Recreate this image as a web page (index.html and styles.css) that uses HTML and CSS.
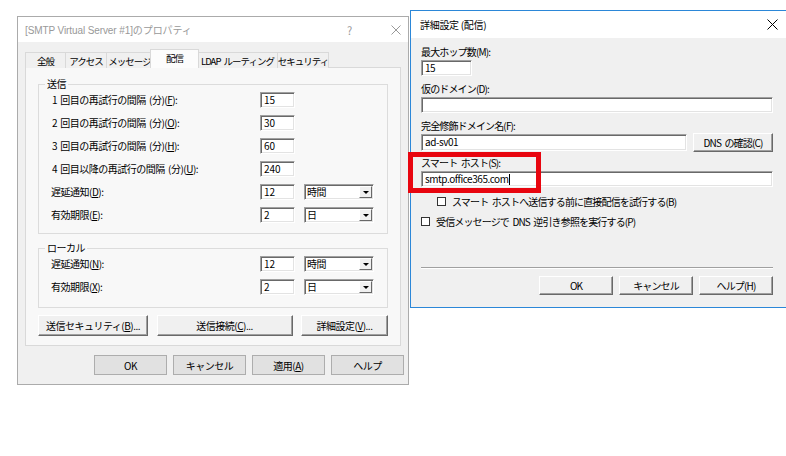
FILE: index.html
```html
<!DOCTYPE html>
<html lang="ja">
<head>
    <meta charset="UTF-8">
    <title>SMTP Virtual Server プロパティ</title>
    <link rel="stylesheet" href="styles.css">
</head>
<body>
    <div class="desk">
        <div class="win props">
            <div class="titlebar inactive">
                <span class="title">[SMTP Virtual Server #1]のプロパティ</span>
                <span class="tb-help">?</span>
                <svg class="tb-close" width="10" height="10" viewBox="0 0 10 10"><path d="M0.5 0.5 L9.5 9.5 M9.5 0.5 L0.5 9.5" stroke="currentColor" stroke-width="1"/></svg>
            </div>
            <div class="props-body">
                <div class="tabs">
                    <div class="tab t-general">全般</div>
                    <div class="tab t-access">アクセス</div>
                    <div class="tab t-message">メッセージ</div>
                    <div class="tab t-delivery active">配信</div>
                    <div class="tab t-ldap">LDAP ルーティング</div>
                    <div class="tab t-security">セキュリティ</div>
                </div>
                <div class="panel">
                    <fieldset class="group">
                        <legend>送信</legend>
                        <div class="frow">
                            <span class="lbl">1 回目の再試行の間隔 (分)(<u>F</u>):</span>
                            <span class="edit">15</span>
                        </div>
                        <div class="frow">
                            <span class="lbl">2 回目の再試行の間隔 (分)(<u>O</u>):</span>
                            <span class="edit">30</span>
                        </div>
                        <div class="frow">
                            <span class="lbl">3 回目の再試行の間隔 (分)(<u>H</u>):</span>
                            <span class="edit">60</span>
                        </div>
                        <div class="frow">
                            <span class="lbl">4 回目以降の再試行の間隔 (分)(<u>U</u>):</span>
                            <span class="edit">240</span>
                        </div>
                        <div class="frow">
                            <span class="lbl short">遅延通知(<u>D</u>):</span>
                            <span class="edit">12</span>
                            <span class="combo"><span class="combo-text">時間</span><span class="combo-btn"></span></span>
                        </div>
                        <div class="frow">
                            <span class="lbl short">有効期限(<u>E</u>):</span>
                            <span class="edit">2</span>
                            <span class="combo"><span class="combo-text">日</span><span class="combo-btn"></span></span>
                        </div>
                    </fieldset>
                    <fieldset class="group local">
                        <legend>ローカル</legend>
                        <div class="frow">
                            <span class="lbl short">遅延通知(<u>N</u>):</span>
                            <span class="edit">12</span>
                            <span class="combo"><span class="combo-text">時間</span><span class="combo-btn"></span></span>
                        </div>
                        <div class="frow">
                            <span class="lbl short">有効期限(<u>X</u>):</span>
                            <span class="edit">2</span>
                            <span class="combo"><span class="combo-text">日</span><span class="combo-btn"></span></span>
                        </div>
                    </fieldset>
                    <div class="panel-buttons">
                        <button class="btn3d b-sec">送信セキュリティ(<u>B</u>)...</button>
                        <button class="btn3d b-conn">送信接続(<u>C</u>)...</button>
                        <button class="btn3d b-adv">詳細設定(<u>V</u>)...</button>
                    </div>
                </div>
                <div class="dlg-buttons">
                    <button class="btn">OK</button>
                    <button class="btn">キャンセル</button>
                    <button class="btn">適用(<u>A</u>)</button>
                    <button class="btn">ヘルプ</button>
                </div>
            </div>
        </div>

        <div class="win adv">
            <div class="titlebar">
                <span class="title">詳細設定 (配信)</span>
                <svg class="tb-close" width="11" height="11" viewBox="0 0 11 11"><path d="M0.5 0.5 L10.5 10.5 M10.5 0.5 L0.5 10.5" stroke="currentColor" stroke-width="1"/></svg>
            </div>
            <div class="adv-body">
                <div class="flabel first">最大ホップ数(M):</div>
                <span class="edit hops">15</span>
                <div class="flabel">仮のドメイン(D):</div>
                <span class="edit"></span>
                <div class="flabel">完全修飾ドメイン名(F):</div>
                <div class="fqdn">
                    <span class="edit grow">ad-sv01</span>
                    <button class="btn3d dns">DNS の確認(C)</button>
                </div>
                <div class="flabel">スマート ホスト(S):</div>
                <span class="edit">smtp.office365.com<span class="caret"></span></span>
                <div class="check sub"><span class="box"></span>スマート ホストへ送信する前に直接配信を試行する(B)</div>
                <div class="check"><span class="box"></span>受信メッセージで DNS 逆引き参照を実行する(P)</div>
                <div class="sep"></div>
                <div class="adv-buttons">
                    <button class="btn3d">OK</button>
                    <button class="btn3d">キャンセル</button>
                    <button class="btn3d">ヘルプ(H)</button>
                </div>
            </div>
            <div class="mark"></div>
        </div>
    </div>
</body>
</html>
```

FILE: styles.css
```css
body {
    margin: 0;
    background: #fff;
    font-family: "Noto Sans CJK JP", "Liberation Sans", sans-serif;
    font-size: 10px;
    color: #000;
}

.desk {
    position: relative;
    width: 786px;
    height: 456px;
    overflow: hidden;
}

/* windows */
.win {
    position: absolute;
    box-sizing: border-box;
    background: #f0f0f0;
    display: flex;
    flex-direction: column;
}
.props {
    left: 17px;
    top: 16px;
    width: 392px;
    height: 369px;
    border: 1px solid #ababab;
    letter-spacing: -0.5px;
    word-spacing: 1.5px;
}
.adv {
    left: 410px;
    top: 10px;
    width: 380px;
    height: 298px;
    border: 1px solid #2b87d8;
    letter-spacing: -0.85px;
    word-spacing: 2px;
}

.titlebar {
    display: flex;
    align-items: center;
    background: #fff;
    height: 25px;
    padding: 0 7px;
    letter-spacing: 0;
    word-spacing: 0;
}
.adv .titlebar {
    height: 27px;
    padding: 0 11px 0 9px;
    letter-spacing: -0.3px;
}
.titlebar .title {
    flex: 1;
}
.titlebar.inactive {
    color: #999;
}
.props .title {
    font-family: "Liberation Sans", "Noto Sans CJK JP", sans-serif;
    font-size: 10px;
    letter-spacing: -0.1px;
}
.tb-help {
    width: 44px;
    font-size: 11px;
}
.tb-close {
    display: block;
}

/* property sheet */
.props-body {
    padding: 7px 7px 0;
}
.tabs {
    display: flex;
    align-items: flex-end;
    height: 19px;
    font-size: 9.5px;
    letter-spacing: -1px;
    word-spacing: 2px;
}
.tab {
    height: 16px;
    box-sizing: border-box;
    display: flex;
    align-items: center;
    justify-content: center;
    border: 1px solid #d9d9d9;
    border-bottom: none;
    margin-right: -1px;
    background: #f0f0f0;
    white-space: nowrap;
}
.tab.active {
    height: 19px;
    margin: 0 -2px 0 -2px;
    padding-bottom: 2px;
    background: #fcfcfc;
    position: relative;
    z-index: 1;
}
.t-general { width: 41px; }
.t-access { width: 42px; }
.t-message { width: 47px; }
.t-delivery { width: 49px; }
.t-ldap { width: 81px; }
.t-security { width: 52px; }

.panel {
    height: 279px;
    box-sizing: border-box;
    border: 1px solid #d9d9d9;
    background: #f8f8f8;
    margin-top: -1px;
    padding: 9px 12px 0;
}

.group {
    margin: 0;
    padding: 1px 13px 10px;
    border: 1px solid #dcdcdc;
    display: flex;
    flex-direction: column;
    gap: 7px;
}
.group legend {
    padding: 0 2px;
    margin-left: -7px;
    line-height: 14px;
}
.group.local {
    margin-top: 7px;
    padding-bottom: 12px;
}

.frow {
    display: grid;
    grid-template-columns: 1fr 35px 70px;
    column-gap: 9px;
    align-items: center;
    height: 16px;
}
.lbl {
    line-height: 14px;
    white-space: nowrap;
}
.lbl.short {
    margin-left: -1px;
}

.edit {
    display: block;
    box-sizing: border-box;
    height: 16px;
    background: #fff;
    border: 1px solid;
    border-color: #a0a0a0 #fff #fff #a0a0a0;
    box-shadow: inset 1px 1px #696969, inset -1px -1px #e3e3e3;
    padding: 0 2px 0 3px;
    line-height: 14px;
    white-space: nowrap;
    letter-spacing: 0;
}
.adv .edit {
    letter-spacing: -0.45px;
}

.combo {
    display: flex;
    box-sizing: border-box;
    height: 16px;
    background: #fff;
    border: 1px solid;
    border-color: #a0a0a0 #fff #fff #a0a0a0;
    box-shadow: inset 1px 1px #696969, inset -1px -1px #e3e3e3;
    padding: 1px 1px 1px 2px;
}
.combo-text {
    flex: 1;
    line-height: 12px;
}
.combo-btn {
    width: 13px;
    box-sizing: border-box;
    background: #f0f0f0;
    border: 1px solid;
    border-color: #fff #696969 #696969 #fff;
    display: flex;
    align-items: center;
    justify-content: center;
}
.combo-btn::after {
    content: "";
    border-left: 3px solid transparent;
    border-right: 3px solid transparent;
    border-top: 3px solid #000;
}

.panel-buttons {
    display: flex;
    justify-content: space-between;
    margin-top: 7px;
}

button {
    font: inherit;
    letter-spacing: inherit;
    word-spacing: inherit;
    color: #000;
    margin: 0;
    padding: 0;
}
.btn3d {
    box-sizing: border-box;
    background: #f0f0f0;
    border: 1px solid;
    border-color: #fff #696969 #696969 #fff;
    box-shadow: inset -1px -1px #a0a0a0;
    height: 21px;
}
.b-sec { width: 110px; }
.b-conn { width: 136px; }
.b-adv { width: 87px; }

.dlg-buttons {
    display: flex;
    justify-content: flex-end;
    gap: 6px;
    margin: 9px -3px 0 0;
}
.btn {
    box-sizing: border-box;
    width: 73px;
    height: 20px;
    background: #e1e1e1;
    border: 1px solid #adadad;
}

/* advanced dialog */
.adv-body {
    flex: 1;
    display: flex;
    flex-direction: column;
    padding: 0 16px 0 10px;
}
.flabel {
    line-height: 13px;
    margin: 6px 0 2px;
}
.flabel.first {
    margin-top: 7px;
}
.hops {
    width: 51px;
}
.fqdn {
    display: flex;
    align-items: center;
    gap: 6px;
    height: 16px;
}
.grow {
    flex: 1;
    height: 17px;
}
.dns {
    width: 80px;
    height: 19px;
    flex: none;
}
.caret {
    display: inline-block;
    width: 1px;
    height: 11px;
    background: #000;
    vertical-align: -2px;
}

.check {
    display: flex;
    align-items: center;
    gap: 6px;
    line-height: 13px;
    margin-top: 7px;
    white-space: nowrap;
}
.check.sub {
    margin-left: 16px;
    margin-top: 8px;
}
.check .box {
    width: 9px;
    height: 9px;
    box-sizing: border-box;
    border: 1px solid #333;
    background: #fff;
}
.sep {
    margin-top: auto;
    height: 1px;
    background: #a0a0a0;
    border-bottom: 1px solid #fff;
}
.adv-buttons {
    display: flex;
    justify-content: flex-end;
    gap: 6px;
    margin: 7px 0 12px;
}
.adv-buttons .btn3d {
    width: 74px;
    height: 19px;
}

.mark {
    position: absolute;
    box-sizing: border-box;
    left: -3px;
    top: 141px;
    width: 133px;
    height: 41px;
    border: 5px solid #e8050f;
}
```
